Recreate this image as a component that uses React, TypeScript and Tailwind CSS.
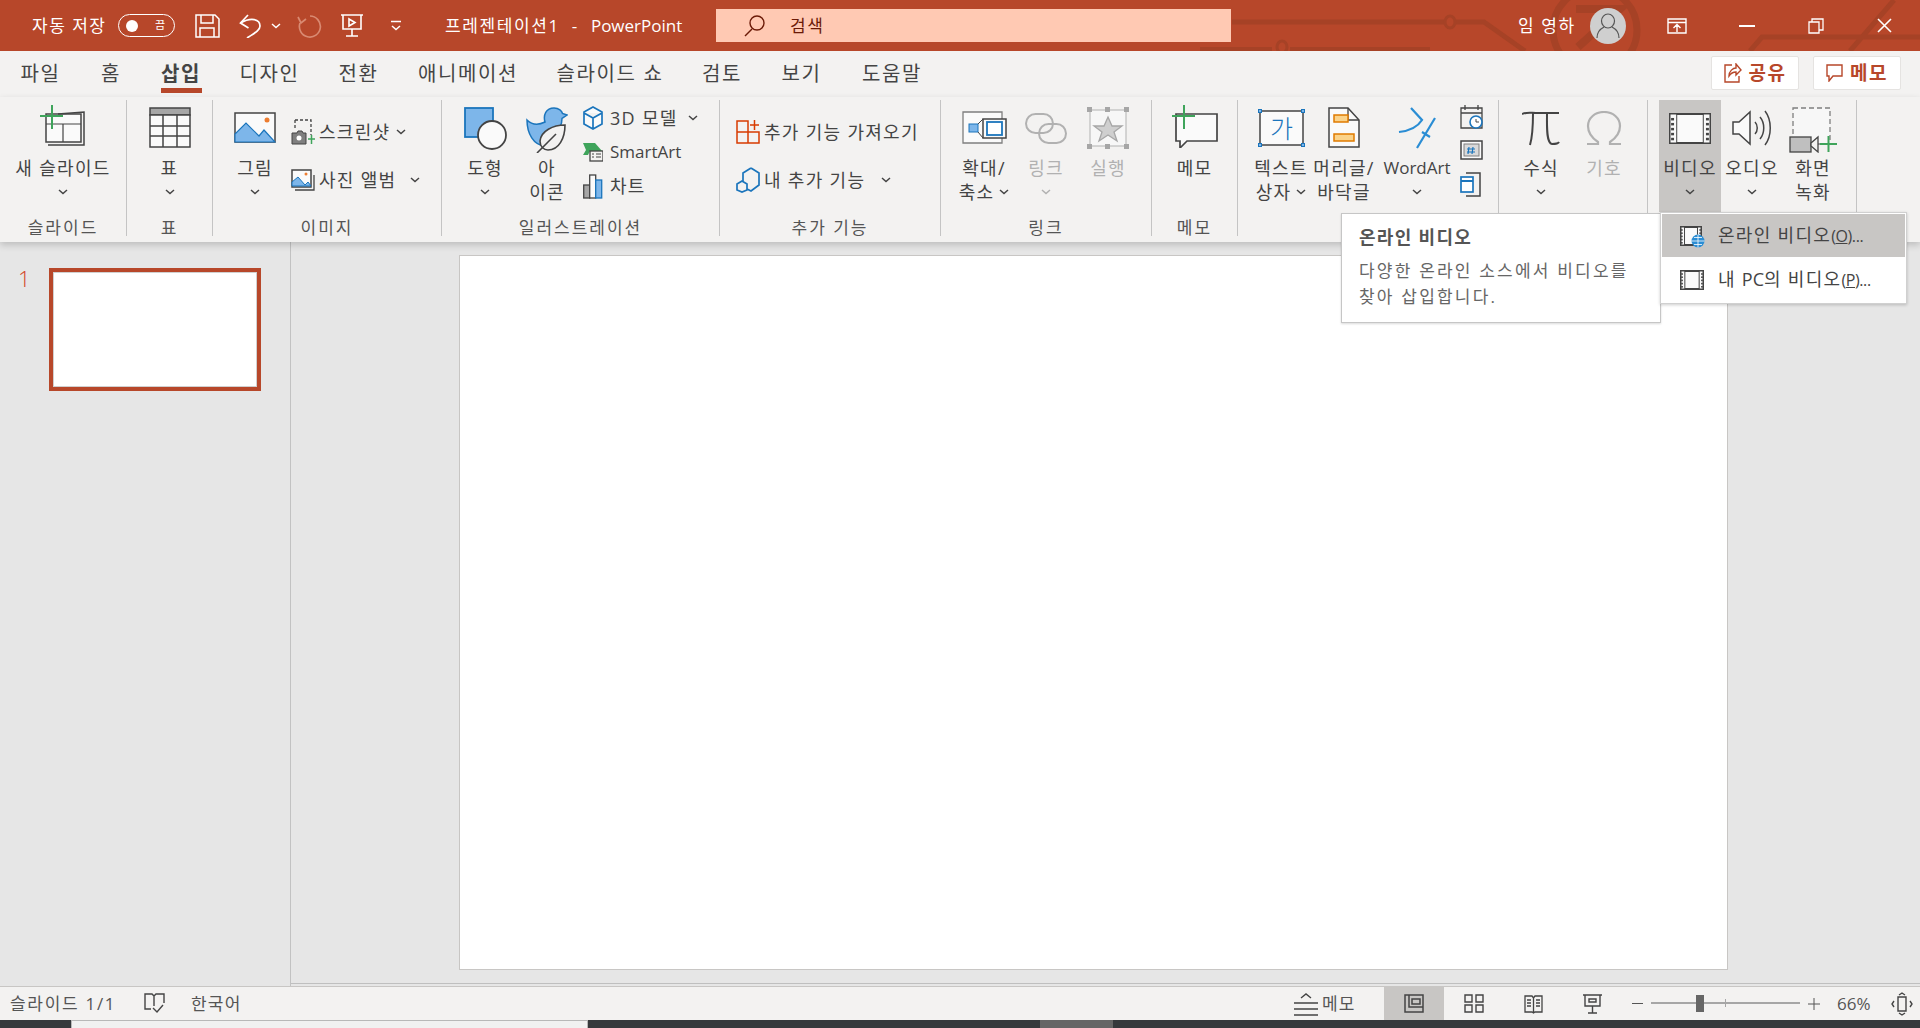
import React from "react";

const BLUE = "#1b75bc";
const SKY = "#7db6ea";
const INK = "#444444";
const GREEN = "#3fa45b";

const Chevron = ({ color = INK, className = "" }: { color?: string; className?: string }) => (
  <svg width="10" height="6" viewBox="0 0 10 6" className={className}>
    <path d="M1 1l4 3.5L9 1" fill="none" stroke={color} strokeWidth="1.5" />
  </svg>
);

interface BigProps {
  icon: React.ReactNode;
  lines: string[];
  chevron?: "below" | "inline";
  disabled?: boolean;
  latin?: boolean;
  className: string;
}

// large ribbon button: icon on top, one or two label lines below
const Big: React.FC<BigProps> = ({ icon, lines, chevron, disabled, latin, className }) => {
  const color = disabled ? "#b1b1b1" : INK;
  return (
    <div className={`flex h-[112px] shrink-0 flex-col items-center ${className}`}>
      <div className="flex h-[56px] w-full shrink-0 items-start justify-center">{icon}</div>
      {lines.map((line, i) => (
        <div
          key={line}
          className={`flex h-[24px] items-center gap-[5px] whitespace-nowrap leading-[24px] ${latin ? "text-[17px] tracking-normal" : "text-[18px] tracking-[1.3px]"} ${disabled ? "text-[#b1b1b1]" : "text-[#444444]"}`}
        >
          {line}
          {chevron === "inline" && i === lines.length - 1 && <Chevron />}
        </div>
      ))}
      {chevron === "below" && (
        <div className="flex h-[24px] items-center">
          <Chevron color={color} />
        </div>
      )}
    </div>
  );
};

interface RowProps {
  icon: React.ReactNode;
  label: string;
  chevron?: string;
  latin?: boolean;
  className: string;
  gap: string;
}

const Row: React.FC<RowProps> = ({ icon, label, chevron, latin, className, gap }) => (
  <div className={`flex items-center whitespace-nowrap text-[#444444] ${latin ? "text-[17px] tracking-normal" : "text-[18px] tracking-[1.3px]"} ${className} ${gap}`}>
    {icon}
    <span>{label}</span>
    {chevron && <Chevron className={chevron} />}
  </div>
);

const Group = ({ label, className, children }: { label: string; className: string; children: React.ReactNode }) => (
  <div className={`flex h-[136px] shrink-0 flex-col border-r border-[#c4c4c4] ${className}`}>
    <div className="flex h-[120px] items-start">{children}</div>
    <div className="h-[16px] whitespace-nowrap text-center text-[17px] leading-[16px] tracking-[2px] text-[#555555]">{label}</div>
  </div>
);

const tabs = [
  { label: "파일", w: "w-[39px]" },
  { label: "홈", w: "w-[20px]" },
  { label: "삽입", w: "w-[38px]", active: true },
  { label: "디자인", w: "w-[57px]" },
  { label: "전환", w: "w-[39px]" },
  { label: "애니메이션", w: "w-[98px]" },
  { label: "슬라이드 쇼", w: "w-[104px]" },
  { label: "검토", w: "w-[38px]" },
  { label: "보기", w: "w-[39px]" },
  { label: "도움말", w: "w-[60px]" },
];

const VideoFrame = ({ w, h, stroke = INK }: { w: number; h: number; stroke?: string }) => {
  const holes = [0.16, 0.32, 0.48, 0.64, 0.8];
  return (
    <svg width={w} height={h} viewBox={`0 0 ${w} ${h}`}>
      <rect x="1" y="1" width={w - 2} height={h - 2} fill="#fafafa" stroke={stroke} strokeWidth="2" />
      <rect x="1" y="1" width={w * 0.16} height={h - 2} fill="#fafafa" stroke={stroke} strokeWidth="1" />
      <rect x={w - 1 - w * 0.16} y="1" width={w * 0.16} height={h - 2} fill="#fafafa" stroke={stroke} strokeWidth="1" />
      {holes.map((t) => (
        <g key={t} fill={stroke}>
          <rect x={w * 0.05} y={h * t} width={w * 0.07} height={h * 0.08} />
          <rect x={w * 0.88} y={h * t} width={w * 0.07} height={h * 0.08} />
        </g>
      ))}
    </svg>
  );
};

const TitleCircuit = () => (
  <svg className="absolute left-0 top-0" width="1920" height="51" viewBox="0 0 1920 51" fill="none" stroke="#a64226">
    <path d="M1232 22h252l41 29" strokeWidth="5" />
    <ellipse cx="1450" cy="22" rx="5" ry="6" strokeWidth="3" fill="#b7472a" />
    <path d="M1290 49h140M1200 49h72" strokeWidth="4" />
    <ellipse cx="1282" cy="47" rx="5" ry="6" strokeWidth="3" />
    <circle cx="1595" cy="30" r="42" strokeWidth="7" />
    <path d="M1576 9h44l-42 38" strokeWidth="8" />
    <path d="M1750 51l12-14h158M1850 51l44-51" strokeWidth="5" />
  </svg>
);

export default function App() {
  return (
    <div className="relative flex h-[1028px] w-[1920px] flex-col overflow-hidden bg-[#e6e6e6] font-['Open_Sans','Noto_Sans_CJK_KR',sans-serif]">
      {/* title bar */}
      <div className="relative flex h-[51px] shrink-0 items-center bg-[#b7472a] pl-[32px] text-white">
        <TitleCircuit />
        <div className="relative flex items-center">
          <span className="w-[76px] whitespace-nowrap text-[17px] tracking-[1.5px]">자동 저장</span>
          <div className="ml-[10px] flex h-[23px] w-[57px] items-center justify-between rounded-full border border-white pl-[7px] pr-[9px]">
            <span className="h-[12px] w-[12px] rounded-full bg-white" />
            <span className="text-[11px]">끔</span>
          </div>
          <svg className="ml-[20px]" width="25" height="24" viewBox="0 0 25 24" fill="none" stroke="#fff" strokeWidth="1.5">
            <path d="M1 1h19l4 4v18H1z" />
            <path d="M6 1v8h12V1M5 23v-9h14v9" />
          </svg>
          <svg className="ml-[19px]" width="22" height="24" viewBox="0 0 22 24" fill="none" stroke="#fff" strokeWidth="1.7">
            <path d="M9 1L1.500 9l8 5" />
            <path d="M1.500 9C12 3 21 5 21 12c0 5-7 8-13 12" />
          </svg>
          <Chevron color="#ffffff" className="ml-[10px]" />
          <svg className="ml-[16px]" width="25" height="25" viewBox="0 0 25 25" fill="none" stroke="#d98a72" strokeWidth="1.7">
            <path d="M13 3a10.5 10.5 0 1 1-10 7" />
            <path d="M1 4l3 6 5-4" />
          </svg>
          <svg className="ml-[19px]" width="22" height="23" viewBox="0 0 22 23" fill="none" stroke="#fff" strokeWidth="1.6">
            <path d="M0 1h22M2 1v14h18V1M11 15v7M5 22h12" />
            <path d="M8 5l6 3.5L8 12z" />
          </svg>
          <svg className="ml-[28px]" width="10" height="11" viewBox="0 0 10 11" fill="none" stroke="#fff" strokeWidth="1.5">
            <path d="M0 1.5h10M1 6l4 3.5L9 6" />
          </svg>
          <span className="ml-[44px] w-[240px] whitespace-nowrap text-[17px] tracking-[1.6px]">
            프레젠테이션1&nbsp; -&nbsp; <span className="tracking-normal">PowerPoint</span>
          </span>
          <div className="ml-[31px] flex h-[33px] w-[515px] items-center bg-[#ffc9b3] pl-[28px] text-[17px] tracking-[1.5px] text-[#6b1a07]">
            <svg width="21" height="22" viewBox="0 0 21 22" fill="none" stroke="#6b1a07" strokeWidth="1.4">
              <ellipse cx="13" cy="8" rx="7" ry="7" />
              <path d="M8 14L1 21" />
            </svg>
            <span className="ml-[25px]">검색</span>
          </div>
          <span className="ml-[287px] w-[58px] whitespace-nowrap text-[17px] tracking-[1.6px]">임 영하</span>
          <div className="ml-[14px] flex h-[36px] w-[36px] items-center justify-center rounded-full bg-[#cfcfcf]">
            <svg width="24" height="26" viewBox="0 0 24 26" fill="none" stroke="#555" strokeWidth="1.2">
              <ellipse cx="12" cy="8" rx="6.5" ry="7" />
              <path d="M1 25c0-7 5-10 7-11M23 25c0-7-5-10-7-11" />
            </svg>
          </div>
          <svg className="ml-[41px]" width="20" height="16" viewBox="0 0 20 16" fill="none" stroke="#fff" strokeWidth="1.4">
            <path d="M1 1h18v14H1zM1 4.5h18M10 14V7M6.5 10L10 6.500l3.500 3.500" />
          </svg>
          <div className="ml-[52px] h-[2px] w-[16px] bg-white" />
          <svg className="ml-[53px]" width="16" height="16" viewBox="0 0 16 16" fill="none" stroke="#fff" strokeWidth="1.3">
            <path d="M1 4h10v11H1zM4 4V1h11v11h-4" />
          </svg>
          <svg className="ml-[53px]" width="15" height="15" viewBox="0 0 15 15" fill="none" stroke="#fff" strokeWidth="1.6">
            <path d="M1 1l13 13M14 1L1 14" />
          </svg>
        </div>
      </div>

      {/* tabs */}
      <div className="flex h-[46px] shrink-0 items-start bg-[#f3f2f1]">
        <div className="flex h-[46px] items-center gap-[41px] pl-[21px] text-[20px] tracking-[1.6px] text-[#444444]">
          {tabs.map((tab) => (
            <div key={tab.label} className={`relative flex h-full items-center justify-center whitespace-nowrap ${tab.w} ${tab.active ? "font-bold" : ""}`}>
              {tab.label}
              {tab.active && <span className="absolute -left-[1px] -right-[2px] top-[37px] h-[5px] bg-[#b7472a]" />}
            </div>
          ))}
        </div>
        <div className="ml-auto mr-[19px] mt-[5px] flex gap-[14px]">
          <div className="flex h-[34px] w-[88px] items-center justify-center gap-[7px] rounded-[2px] border border-[#e5e3e1] bg-white text-[19px] font-bold tracking-[1.5px] text-[#b7472a]">
            <svg width="18" height="20" viewBox="0 0 18 20" fill="none" stroke="#b7472a" strokeWidth="1.400">
              <path d="M8 2H1v17h14v-6" />
              <path d="M5 13c0-5 4-8 7-8V1l5 6-5 5V9c-3 0-5 1-7 4z" />
            </svg>
            공유
          </div>
          <div className="flex h-[34px] w-[88px] items-center justify-center gap-[7px] rounded-[2px] border border-[#e5e3e1] bg-white text-[19px] font-bold tracking-[1.5px] text-[#b7472a]">
            <svg width="17" height="18" viewBox="0 0 17 18" fill="none" stroke="#b7472a" strokeWidth="1.4">
              <path d="M1 1h15v11H7l-4 5v-5H1z" />
            </svg>
            메모
          </div>
        </div>
      </div>

      {/* ribbon */}
      <div className="relative z-10 flex h-[145px] shrink-0 bg-[#f3f2f1] pt-[3px] shadow-[0_3px_7px_rgba(0,0,0,0.18)]">
        <Group label="슬라이드" className="w-[127px]">
          <Big
            className="w-[126px]"
            lines={["새 슬라이드"]}
            chevron="below"
            icon={
              <svg className="mt-[4px]" width="46" height="42" viewBox="0 0 46 42" fill="none">
                <path d="M6 10h35v28H6z" fill="#fafafa" stroke={INK} strokeWidth="1.5" />
                <path d="M6 20h35M23 20v18" stroke={INK} strokeWidth="1.2" />
                <path d="M18 10 44 8v33H8" stroke={INK} strokeWidth="1.5" />
                <path d="M0 12h23M12 1v24" stroke={GREEN} strokeWidth="2" />
              </svg>
            }
          />
        </Group>
        <Group label="표" className="w-[86px]">
          <Big
            className="w-[85px]"
            lines={["표"]}
            chevron="below"
            icon={
              <svg className="mt-[7px]" width="42" height="41" viewBox="0 0 42 41" fill="none" stroke={INK} strokeWidth="1.5">
                <rect x="1" y="1" width="40" height="7" fill="#a6a6a6" />
                <rect x="1" y="8" width="40" height="32" fill="#fafafa" />
                <path d="M14 8v32M28 8v32M1 19h40M1 29h40" />
              </svg>
            }
          />
        </Group>
        <Group label="이미지" className="w-[229px]">
          <div className="flex pl-[11px]">
            <Big
              className="w-[62px]"
              lines={["그림"]}
              chevron="below"
              icon={
                <svg className="mt-[12px]" width="42" height="31" viewBox="0 0 42 31" fill="none">
                  <rect x="1" y="1" width="40" height="29" fill="#fafafa" stroke={INK} strokeWidth="1.5" />
                  <path d="M1 30V22l11-11 13 13 5-6 11 12z" fill={SKY} stroke={BLUE} strokeWidth="1.2" />
                  <circle cx="33" cy="8" r="2.500" fill="#ed7d31" />
                </svg>
              }
            />
            <div className="ml-[5px] flex flex-col pt-[8px]">
              <Row
                className="h-[48px]"
                gap="gap-[4px]"
                label="스크린샷"
                chevron="ml-[2px]"
                icon={
                  <svg width="24" height="26" viewBox="0 0 24 26" fill="none">
                    <path d="M4 1h16v15" stroke={INK} strokeWidth="1.300" strokeDasharray="3 2" />
                    <path d="M4 1v10" stroke={INK} strokeWidth="1.300" strokeDasharray="3 2" />
                    <path d="M1 14h5l1-2h4l1 2h3v11H1z" fill="#7f7f7f" stroke={INK} />
                    <circle cx="8" cy="19" r="2.500" fill="#fff" />
                    <path d="M17 20h7M20.500 16v9" stroke={GREEN} strokeWidth="1.500" />
                  </svg>
                }
              />
              <Row
                className="h-[48px]"
                gap="gap-[4px]"
                label="사진 앨범"
                chevron="ml-[10px]"
                icon={
                  <svg width="24" height="23" viewBox="0 0 24 23" fill="none">
                    <path d="M4 21h19V6" stroke={INK} strokeWidth="1.300" />
                    <rect x="1" y="1" width="19" height="17" fill="#fafafa" stroke={INK} strokeWidth="1.500" />
                    <path d="M1 17v-4l6-5 7 8 3-3 3 4z" fill={SKY} stroke={BLUE} />
                    <circle cx="15" cy="5" r="1.500" fill="#ed7d31" />
                  </svg>
                }
              />
            </div>
          </div>
        </Group>
        <Group label="일러스트레이션" className="w-[278px]">
          <div className="flex pl-[12px]">
            <Big
              className="w-[62px]"
              lines={["도형"]}
              chevron="below"
              icon={
                <svg className="mt-[7px]" width="43" height="43" viewBox="0 0 43 43" fill="none">
                  <rect x="1" y="1" width="28" height="29" fill={SKY} stroke={BLUE} strokeWidth="1.800" />
                  <ellipse cx="28" cy="28" rx="14" ry="14" fill="#fafafa" stroke={INK} strokeWidth="1.800" />
                </svg>
              }
            />
            <Big
              className="w-[62px]"
              lines={["아", "이콘"]}
              icon={
                <svg className="mt-[7px]" width="42" height="46" viewBox="0 0 42 46" fill="none">
                  <path d="M1 13c5 5 12 5 18 2C17 8 20 1 28 1c5 0 8 3 8.500 5.500L41 8l-5 3.500c0 6-3 12-8 16l-10 11C8 38 1 27 1 13z" fill={SKY} stroke={BLUE} strokeWidth="1.500" />
                  <path d="M39 18c-12 0-24 6-25 16 0 6 4 9 8 9 11 0 17-12 17-25z" fill="#f3f2f1" stroke={INK} strokeWidth="1.600" />
                  <path d="M11 46l19-19" stroke={INK} strokeWidth="1.600" />
                </svg>
              }
            />
            <div className="ml-[5px] flex flex-col pt-[1px]">
              <Row
                className="h-[34px]"
                gap="gap-[7px]"
                label="3D 모델"
                chevron="ml-[3px]"
                icon={
                  <svg width="20" height="24" viewBox="0 0 20 24" fill="none" stroke={BLUE} strokeWidth="1.700">
                    <path d="M10 1l9 5v12l-9 5-9-5V6zM1 7l9 5 9-5M10 12v10" fill="#fafafa" />
                  </svg>
                }
              />
              <Row
                className="h-[34px]"
                gap="gap-[7px]"
                label="SmartArt"
                latin
                icon={
                  <svg width="20" height="20" viewBox="0 0 20 20" fill="none">
                    <path d="M0 1h12l7 8H7L5 13H0l3-5z" fill={GREEN} />
                    <rect x="7" y="9" width="13" height="10" fill="#f3f2f1" stroke={INK} strokeWidth="1.300" />
                    <path d="M9 12h2M13 12h5M9 15h2M13 15h5" stroke={INK} />
                  </svg>
                }
              />
              <Row
                className="h-[34px]"
                gap="gap-[7px]"
                label="차트"
                icon={
                  <svg width="20" height="25" viewBox="0 0 20 25" fill="none" strokeWidth="1.300">
                    <rect x="0.700" y="11" width="6" height="13" fill="#a6a6a6" stroke={INK} />
                    <rect x="6.700" y="1" width="6" height="23" fill="#fafafa" stroke={INK} />
                    <rect x="12.700" y="6" width="6" height="18" fill={SKY} stroke={BLUE} />
                  </svg>
                }
              />
            </div>
          </div>
        </Group>
        <Group label="추가 기능" className="w-[221px]">
          <div className="flex flex-col pl-[16px] pt-[8px]">
            <Row
              className="h-[48px]"
              gap="gap-[4px]"
              label="추가 기능 가져오기"
              icon={
                <svg width="24" height="24" viewBox="0 0 24 24" fill="none" stroke="#d83b01" strokeWidth="1.500">
                  <path d="M1 1h11v11H1zM1 12h11v11H1zM12 12h11v11H12zM14 5h9M18.500 0v10" />
                </svg>
              }
            />
            <Row
              className="h-[48px]"
              gap="gap-[4px]"
              label="내 추가 기능"
              chevron="ml-[12px]"
              icon={
                <svg width="24" height="26" viewBox="0 0 24 26" fill="none" stroke={BLUE} strokeWidth="1.700">
                  <path d="M15 1l8 5v12l-8 6-4-2M7 14V6l8-5" />
                  <path d="M6 14l5 3v6l-5 2-5-2v-6z" />
                </svg>
              }
            />
          </div>
        </Group>
        <Group label="링크" className="w-[211px]">
          <div className="flex pl-[12px]">
            <Big
              className="w-[62px]"
              lines={["확대/", "축소"]}
              chevron="inline"
              icon={
                <svg className="mt-[11px]" width="45" height="33" viewBox="0 0 45 33" fill="none">
                  <path d="M1 1h39v31H1z" fill="#fafafa" stroke="#7f7f7f" strokeWidth="1.300" />
                  <rect x="21" y="8" width="23" height="19" fill="#fafafa" stroke={INK} strokeWidth="1.500" />
                  <rect x="25" y="11" width="15" height="13" fill="#fff" stroke={BLUE} strokeWidth="1.800" />
                  <rect x="7" y="13" width="9" height="8" fill={SKY} stroke={BLUE} />
                  <path d="M16 13l5-5M16 21l5 6" stroke={INK} />
                </svg>
              }
            />
            <Big
              className="w-[62px]"
              lines={["링크"]}
              chevron="below"
              disabled
              icon={
                <svg className="mt-[13px]" width="42" height="31" viewBox="0 0 42 31" fill="none" stroke="#b1b1b1" strokeWidth="2">
                  <rect x="1" y="1" width="27" height="19" rx="9.500" />
                  <rect x="14" y="11" width="27" height="19" rx="9.500" />
                </svg>
              }
            />
            <Big
              className="w-[62px]"
              lines={["실행"]}
              disabled
              icon={
                <svg className="mt-[7px]" width="42" height="42" viewBox="0 0 42 42" fill="none">
                  <rect x="3" y="3" width="36" height="36" fill="#f7f7f7" stroke="#b1b1b1" />
                  <path d="M21 10l4 9h10l-8 6 3 9-9-6-9 6 3-9-8-6h10z" fill="#cfcfcf" stroke="#a6a6a6" strokeWidth="1.300" />
                  <g fill="#a6a6a6">
                    <rect width="5" height="5" />
                    <rect x="37" width="5" height="5" />
                    <rect y="37" width="5" height="5" />
                    <rect x="37" y="37" width="5" height="5" />
                    <rect x="18" width="5" height="5" />
                    <rect x="18" y="37" width="5" height="5" />
                  </g>
                </svg>
              }
            />
          </div>
        </Group>
        <Group label="메모" className="w-[86px]">
          <Big
            className="w-[85px]"
            lines={["메모"]}
            icon={
              <svg className="mt-[4px]" width="46" height="44" viewBox="0 0 46 44" fill="none">
                <path d="M4 10h41v27H15l-7 7v-7H4z" fill="#fafafa" stroke={INK} strokeWidth="1.700" />
                <path d="M0 12h23M12 1v24" stroke={GREEN} strokeWidth="2" />
              </svg>
            }
          />
        </Group>
        <Group label="" className="w-[261px]">
          <div className="flex pl-[8px]">
            <Big
              className="w-[70px]"
              lines={["텍스트", "상자"]}
              chevron="inline"
              icon={
                <svg className="mt-[9px]" width="47" height="38" viewBox="0 0 47 38" fill="none">
                  <rect x="2" y="2" width="43" height="34" fill="#fafafa" stroke={INK} strokeWidth="1.500" />
                  <g fill={SKY} stroke={BLUE}>
                    <rect x="0.500" y="0.500" width="3" height="3" />
                    <rect x="43.500" y="0.500" width="3" height="3" />
                    <rect x="0.500" y="34.500" width="3" height="3" />
                    <rect x="43.500" y="34.500" width="3" height="3" />
                  </g>
                  <text x="23.500" y="29" textAnchor="middle" fontSize="25" fill={BLUE} fontFamily="'Noto Sans CJK KR'" fontWeight="300">가</text>
                </svg>
              }
            />
            <Big
              className="w-[56px]"
              lines={["머리글/", "바닥글"]}
              icon={
                <svg className="mt-[7px]" width="32" height="41" viewBox="0 0 32 41" fill="none">
                  <path d="M1 1h19l11 12v27H1z" fill="#fafafa" stroke={INK} strokeWidth="1.500" />
                  <path d="M20 1v12h11" stroke={INK} strokeWidth="1.300" />
                  <rect x="6" y="8" width="14" height="7" fill="#fbd38a" stroke="#e07b00" strokeWidth="1.500" />
                  <rect x="6" y="27" width="20" height="7" fill="#fbd38a" stroke="#e07b00" strokeWidth="1.500" />
                </svg>
              }
            />
            <Big
              className="ml-[2px] w-[86px]"
              lines={["WordArt"]}
              chevron="below"
              latin
              icon={
                <svg className="mt-[7px]" width="38" height="42" viewBox="0 0 38 42" fill="none" stroke="#2a8dd4" strokeWidth="2.200">
                  <path d="M13 1l11 12c-5 8-14 11-23 12" />
                  <path d="M37 11L19 41M24 25l8 5" />
                </svg>
              }
            />
            <div className="flex w-[23px] flex-col pt-[5px]">
              <svg width="23" height="24" viewBox="0 0 23 24" fill="none">
                <path d="M1 3h21v20H1zM1 8h21M5 0v5M18 0v5" stroke={INK} strokeWidth="1.300" />
                <circle cx="16" cy="17" r="6" fill="#fff" stroke={BLUE} strokeWidth="1.600" />
                <path d="M16 14v3h3" stroke={INK} />
              </svg>
              <svg className="mt-[11px]" width="23" height="20" viewBox="0 0 23 20" fill="none">
                <rect x="1" y="1" width="21" height="18" fill="#fafafa" stroke={INK} strokeWidth="1.500" />
                <rect x="4" y="4" width="15" height="12" fill="#d9d9d9" stroke="#7f7f7f" />
                <path d="M9 7l-1 7M13 7l-1 7M7 9h8M7 12h8" stroke={BLUE} strokeWidth="1.200" />
              </svg>
              <svg className="mt-[12px]" width="21" height="25" viewBox="0 0 21 25" fill="none">
                <path d="M6 1h14v23H6" stroke={INK} strokeWidth="1.500" />
                <rect x="1" y="5" width="12" height="15" fill="#fff" stroke={BLUE} strokeWidth="1.700" />
                <path d="M1 9h12" stroke={BLUE} strokeWidth="2" />
              </svg>
            </div>
          </div>
        </Group>
        <Group label="" className="w-[149px]">
          <div className="flex pl-[11px]">
            <Big
              className="w-[62px]"
              lines={["수식"]}
              chevron="below"
              icon={
                <svg className="mt-[11px]" width="38" height="35" viewBox="0 0 38 35" fill="none" stroke={INK} strokeWidth="2">
                  <path d="M0 3c5-2 9-1 14-1h23M11 2c0 12 0 22-3 32M25 2c0 12-1 30 5 31 3 0 6 0 7-2" />
                </svg>
              }
            />
            <Big
              className="ml-[1px] w-[62px]"
              lines={["기호"]}
              disabled
              icon={
                <svg className="mt-[11px]" width="36" height="35" viewBox="0 0 36 35" fill="none" stroke="#b1b1b1" strokeWidth="2.200">
                  <path d="M1 33h11v-2C6 27 2 21 2 15 2 7 9 1 18 1s16 6 16 14c0 6-4 12-10 16v2h11" />
                </svg>
              }
            />
          </div>
        </Group>
        <Group label="" className="w-[209px]">
          <div className="flex pl-[11px]">
            <Big
              className="w-[62px] bg-[#c8c6c4]"
              lines={["비디오"]}
              chevron="below"
              icon={
                <div className="mt-[13px] h-[31px]">
                  <VideoFrame w={42} h={31} />
                </div>
              }
            />
            <Big
              className="w-[62px]"
              lines={["오디오"]}
              chevron="below"
              icon={
                <svg className="mt-[9px]" width="40" height="38" viewBox="0 0 40 38" fill="none" stroke={INK} strokeWidth="1.500">
                  <path d="M1 13h6L18 3v32L7 25H1z" fill="#fafafa" />
                  <path d="M23 13c3 3 3 9 0 12M28 8c5 6 5 16 0 22M33 2c7 9 7 25 0 34" />
                </svg>
              }
            />
            <Big
              className="w-[60px]"
              lines={["화면", "녹화"]}
              icon={
                <svg className="mt-[7px]" width="48" height="46" viewBox="0 0 48 46" fill="none">
                  <rect x="4" y="1" width="37" height="36" fill="#f7f7f7" stroke="#7f7f7f" strokeWidth="1.300" strokeDasharray="5 3" />
                  <rect x="1" y="30" width="21" height="15" fill="#bfbfbf" stroke={INK} strokeWidth="1.300" />
                  <path d="M22 36l7-6v15l-7-6z" fill="#f3f2f1" stroke={INK} strokeWidth="1.300" />
                  <path d="M31 37h17M39.500 29v16" stroke={GREEN} strokeWidth="2" />
                </svg>
              }
            />
          </div>
        </Group>
      </div>

      {/* slide area */}
      <div className="flex min-h-0 flex-1 border-b border-[#c8c6c4]">
        <div className="flex w-[291px] shrink-0 border-r border-[#c2c2c2] pl-[18px] pt-[26px]">
          <span className="w-[31px] text-[22px] font-light leading-[20px] text-[#d24726]">1</span>
          <div className="h-[123px] w-[212px] border-[4px] border-[#b7472a] bg-white outline outline-1 -outline-offset-5 outline-[#d0d0d0]" />
        </div>
        <div className="flex flex-1 flex-col">
          <div className="flex-1 pl-[168px] pt-[13px]">
            <div className="h-[715px] w-[1269px] border border-[#c8c6c4] bg-white" />
          </div>
          <div className="h-[3px] border-t border-[#bfbfbf]" />
        </div>
      </div>

      {/* status bar */}
      <div className="flex h-[33px] shrink-0 items-center bg-[#f3f2f1] pl-[10px] text-[17px] tracking-[1.2px] text-[#555555]">
        <span className="w-[103px] whitespace-nowrap tracking-[1.7px]">슬라이드 1/1</span>
        <svg className="ml-[31px]" width="21" height="21" viewBox="0 0 21 21" fill="none" stroke={INK} strokeWidth="1.400">
          <path d="M7 16H1V1h7l2 2 2-2h8v9M10 3v10M9 15l4 4 6-7" />
        </svg>
        <span className="ml-[26px] w-[51px] whitespace-nowrap">한국어</span>
        <svg className="ml-[1052px]" width="24" height="24" viewBox="0 0 24 24" fill="none" stroke={INK} strokeWidth="1.400">
          <path d="M7 6l5-4 5 4M0 11h24M0 17h24M0 23h24" />
        </svg>
        <span className="ml-[4px] w-[35px] whitespace-nowrap">메모</span>
        <div className="ml-[27px] flex h-[33px] w-[60px] items-center justify-center bg-[#c8c6c4]">
          <svg width="20" height="19" viewBox="0 0 20 19" fill="none" stroke={INK} strokeWidth="1.500">
            <path d="M1 1h18v17H1zM5 1v12h14M8 5h8v5H8z" />
          </svg>
        </div>
        <svg className="ml-[20px]" width="20" height="19" viewBox="0 0 20 19" fill="none" stroke={INK} strokeWidth="1.400">
          <path d="M1 1h7v7H1zM12 1h7v7h-7zM1 11h7v7H1zM12 11h7v7h-7z" />
        </svg>
        <svg className="ml-[40px]" width="19" height="20" viewBox="0 0 19 20" fill="none" stroke={INK} strokeWidth="1.300">
          <path d="M1 2h7l1.500 2L11 2h7v16h-7l-1.500 1L8 18H1zM9.500 4v15M3 6h4M3 9h4M3 12h4M12 6h4M12 9h4M12 12h4" />
        </svg>
        <svg className="ml-[40px]" width="19" height="20" viewBox="0 0 19 20" fill="none" stroke={INK} strokeWidth="1.400">
          <path d="M0 1h19M2 1v11h15V1M9.500 12v7M5 19h9M6 5h7v3H6z" />
        </svg>
        <div className="ml-[30px] h-[1px] w-[11px] bg-[#555555]" />
        <div className="relative ml-[8px] h-[17px] w-[149px]">
          <div className="absolute left-0 right-0 top-[7px] h-[2px] bg-[#a6a6a6]" />
          <div className="absolute left-[74px] top-[4px] h-[8px] w-[1px] bg-[#a6a6a6]" />
          <div className="absolute left-[45px] top-0 h-[17px] w-[8px] bg-[#666666]" />
        </div>
        <svg className="ml-[8px]" width="12" height="12" viewBox="0 0 12 12" stroke="#555" strokeWidth="1">
          <path d="M0 6h12M6 0v12" />
        </svg>
        <span className="ml-[17px] w-[36px] whitespace-nowrap text-[17px] tracking-normal">66%</span>
        <svg className="ml-[18px]" width="22" height="24" viewBox="0 0 22 24" fill="none" stroke={INK} strokeWidth="1.400">
          <path d="M7 5h8v14H7zM8 3l3-2 3 2M8 21l3 2 3-2M3 9l-2 3 2 3M19 9l2 3-2 3" />
        </svg>
      </div>

      {/* taskbar sliver */}
      <div className="flex h-[8px] shrink-0 bg-[#36393c]">
        <div className="ml-[71px] w-[517px] border-x border-t border-[#b8b8b8] bg-[#f1f1f1]" />
        <div className="ml-[452px] w-[73px] bg-[#666666]" />
      </div>

      {/* tooltip */}
      <div className="absolute left-[1341px] top-[213px] z-20 h-[110px] w-[320px] border border-[#c6c6c6] bg-white pl-[17px] shadow-[0_1px_2px_rgba(0,0,0,0.15)]">
        <div className="pt-[11px] text-[18px] font-bold leading-[24px] tracking-[1.300px] text-[#555555]">온라인 비디오</div>
        <div className="mt-[9px] text-[17px] leading-[26px] tracking-[2.200px] text-[#666666]">
          <div className="whitespace-nowrap">다양한 온라인 소스에서 비디오를</div>
          <div className="whitespace-nowrap">찾아 삽입합니다.</div>
        </div>
      </div>

      {/* video dropdown */}
      <div className="absolute left-[1660px] top-[212px] z-30 w-[247px] border border-[#d0d0d0] bg-white p-[1px] text-[18px] tracking-[1.300px] text-[#444444] shadow-[0_1px_3px_rgba(0,0,0,0.2)]">
        <div className="flex h-[43px] items-center gap-[14px] bg-[#c8c6c4] pl-[18px]">
          <div className="relative h-[20px] w-[24px]">
            <VideoFrame w={22} h={20} />
            <svg className="absolute -bottom-[2px] -right-[1px]" width="14" height="14" viewBox="0 0 14 14" fill="none">
              <circle cx="7" cy="7" r="6.500" fill="#2a8dd4" />
              <path d="M0.500 7h13M7 0.500v13M3 3.500h8M3 10.500h8" stroke="#fff" strokeWidth="0.800" />
            </svg>
          </div>
          <span className="whitespace-nowrap">
            온라인 비디오
            <span className="text-[16px] tracking-[-0.4px]">
              (<span className="underline">O</span>)...
            </span>
          </span>
        </div>
        <div className="flex h-[45px] items-center gap-[14px] pl-[18px]">
          <div className="h-[20px] w-[24px]">
            <VideoFrame w={24} h={20} />
          </div>
          <span className="whitespace-nowrap">
            내 <span className="tracking-normal">PC</span>의 비디오
            <span className="text-[16px] tracking-[-0.4px]">
              (<span className="underline">P</span>)...
            </span>
          </span>
        </div>
      </div>
    </div>
  );
}
